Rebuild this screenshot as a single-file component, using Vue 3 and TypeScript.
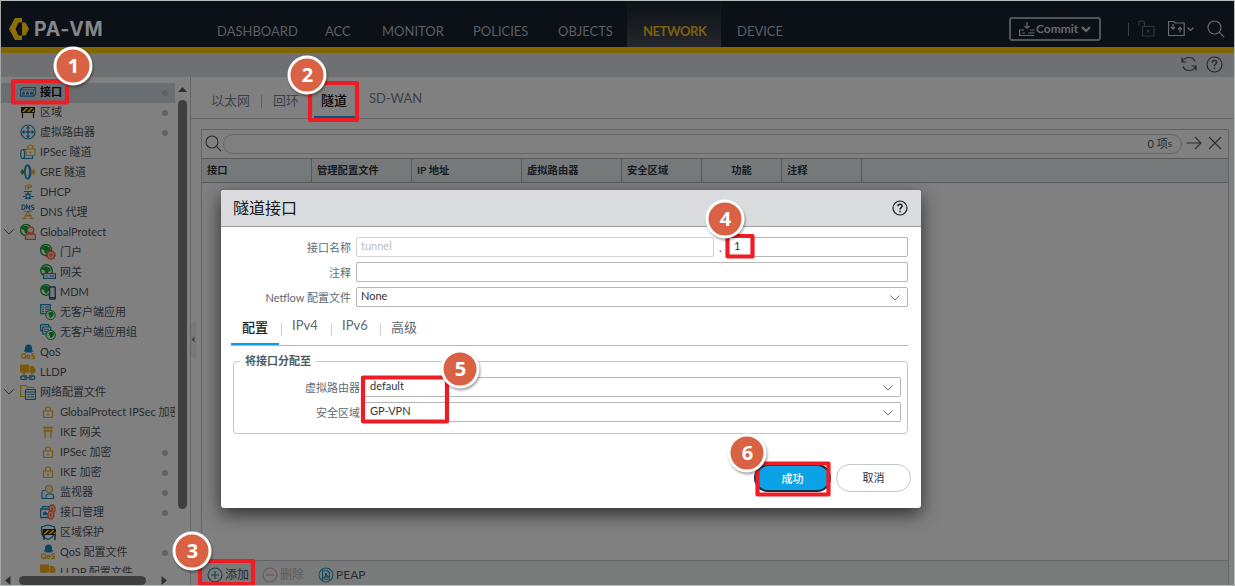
<script setup lang="ts">
interface NavItem { label: string; width: number; active?: boolean }
interface TreeNode { label: string; icon: string; level: number; dot?: boolean; open?: boolean; selected?: boolean }
interface Column { label: string; width: number; center?: boolean }
interface Mark { n: number; cx: number; cy: number; x: number; y: number; w: number; h: number }

const nav: NavItem[] = [
  { label: 'DASHBOARD', width: 108 },
  { label: 'ACC', width: 57 },
  { label: 'MONITOR', width: 91 },
  { label: 'POLICIES', width: 85 },
  { label: 'OBJECTS', width: 85 },
  { label: 'NETWORK', width: 94, active: true },
  { label: 'DEVICE', width: 76 },
]

const tree: TreeNode[] = [
  { label: '接口', icon: 'ports', level: 0, dot: true, selected: true },
  { label: '区域', icon: 'barrier', level: 0, dot: true },
  { label: '虚拟路由器', icon: 'router', level: 0, dot: true },
  { label: 'IPSec 隧道', icon: 'ipsec', level: 0 },
  { label: 'GRE 隧道', icon: 'gre', level: 0 },
  { label: 'DHCP', icon: 'dhcp', level: 0 },
  { label: 'DNS 代理', icon: 'dns', level: 0 },
  { label: 'GlobalProtect', icon: 'gp', level: 0, open: true },
  { label: '门户', icon: 'portal', level: 1 },
  { label: '网关', icon: 'gateway', level: 1 },
  { label: 'MDM', icon: 'mdm', level: 1 },
  { label: '无客户端应用', icon: 'app', level: 1 },
  { label: '无客户端应用组', icon: 'appgroup', level: 1 },
  { label: 'QoS', icon: 'qos', level: 0 },
  { label: 'LLDP', icon: 'lldp', level: 0 },
  { label: '网络配置文件', icon: 'folder', level: 0, open: true },
  { label: 'GlobalProtect IPSec 加密', icon: 'lock', level: 1 },
  { label: 'IKE 网关', icon: 'ike', level: 1 },
  { label: 'IPSec 加密', icon: 'lock', level: 1, dot: true },
  { label: 'IKE 加密', icon: 'lock', level: 1, dot: true },
  { label: '监视器', icon: 'monitor', level: 1, dot: true },
  { label: '接口管理', icon: 'mgmt', level: 1, dot: true },
  { label: '区域保护', icon: 'shield', level: 1 },
  { label: 'QoS 配置文件', icon: 'qos', level: 1, dot: true },
  { label: 'LLDP 配置文件', icon: 'lldp', level: 1 },
]

const columns: Column[] = [
  { label: '接口', width: 110 },
  { label: '管理配置文件', width: 100 },
  { label: 'IP 地址', width: 110 },
  { label: '虚拟路由器', width: 100 },
  { label: '安全区域', width: 80 },
  { label: '功能', width: 80, center: true },
  { label: '注释', width: 80 },
]

const marks: Mark[] = [
  { n: 1, cx: 73, cy: 66, x: 11, y: 79, w: 58, h: 25.5 },
  { n: 2, cx: 307, cy: 75, x: 308, y: 81, w: 51, h: 41 },
  { n: 3, cx: 192, cy: 551, x: 198, y: 559, w: 57, h: 27 },
  { n: 4, cx: 725, cy: 219, x: 725.5, y: 234, w: 29, h: 24.5 },
  { n: 5, cx: 460, cy: 369, x: 361, y: 375.5, w: 88, h: 48 },
  { n: 6, cx: 747, cy: 453, x: 755.5, y: 461.5, w: 75, h: 35 },
]

const B = '#0d4560'
const Y = '#78590e'
const G = '#0c521c'
const R = '#8a3018'
const barrier = (x: number, y: number) =>
  `<g transform="translate(${x} ${y})"><path d="M0 0h14v6h-14z" fill="#15130a"/><path d="M1 5l4-4h2l-4 4zM6 5l4-4h2l-4 4zM10.5 5l2.5-2.5v2.5z" fill="#9a7d10"/><path d="M1.5 6v5M12.5 6v5" stroke="#15130a" stroke-width="1.2"/></g>`
const globe = (x: number, y: number, r: number) =>
  `<g transform="translate(${x} ${y})"><circle r="${r}" fill="none" stroke="${G}" stroke-width="1.4"/><path d="M-2-4l3 0 3 2 0 3-2 0-1 3-2-1-1-3-3-1 1-2z" fill="${G}"/></g>`
const lock = (x: number, y: number) =>
  `<g transform="translate(${x} ${y})" fill="none" stroke="${Y}" stroke-width="1.2"><path d="M.5 4.500h9v6.500h-9zM2.500 4.500v-2q0-2 2.500-2t2.500 2v2"/><path d="M5 7v2" stroke-width="1.6"/></g>`
const truck = `<path d="M0 .5h9v8h-9zM9.500 2h4l2 3v3.500h-6z" fill="${Y}"/><circle cx="4" cy="9" r="1.500" fill="${Y}"/><circle cx="12" cy="9" r="1.500" fill="${Y}"/><g fill="none" stroke="${B}" stroke-width="1.300"><path d="M7 12h-4.500q-1.800 0-1.800 1.700t1.800 1.700h4.500M9 12h4q1.800 0 1.800 1.700t-1.800 1.700h-4M4.500 13.700h7"/></g>`

const icons: Record<string, string> = {
  ports: `<path d="M3 3.500h12.500v7l-2 1.700h-13v-6.500z" fill="none" stroke="${B}" stroke-width="1.200"/><path d="M.5 5.700h13l2-1.700M13.500 5.700v6.500" stroke="${B}" fill="none" stroke-width=".7"/><path d="M2 10.500v-2h1v-1h1v1h1v2zM6 10.500v-2h1v-1h1v1h1v2zM10 10.500v-2h1v-1h1v1h1v2z" fill="${B}"/>`,
  barrier: barrier(1, 3),
  router: `<circle cx="8" cy="8" r="7" fill="none" stroke="${B}" stroke-width="1.200"/><path d="M8 2.500v11M2.500 8h11M6.300 4.500l1.700-2 1.700 2M6.300 11.500l1.700 2 1.700-2M4.500 6.300l-2 1.700 2 1.700M11.500 6.300l2 1.700-2 1.700" fill="none" stroke="${B}" stroke-width="1.100"/><circle cx="8" cy="8" r="1.500" fill="${B}"/>`,
  ipsec: `<ellipse cx="2.700" cy="10" rx="2" ry="4.500" fill="none" stroke="${B}" stroke-width="1.200"/><path d="M3 5.500h3M3 14.500h9.500v-2.500" fill="none" stroke="${B}" stroke-width="1.200"/>${lock(5.5, 0.5)}`,
  gre: `<ellipse cx="7.500" cy="8" rx="2.500" ry="6.800" fill="none" stroke="${B}" stroke-width="1.700"/><path d="M8 1.200q3 1 3 6.800t-3 6.800" fill="none" stroke="${B}"/><path d="M0 8h4M2 5.500l2.500 2.500-2.500 2.500z" stroke="${G}" fill="${G}"/><path d="M15.500 8h-3M14.500 5.500l-3 2.500 3 2.500" stroke="${Y}" fill="none" stroke-width="1.500"/>`,
  dhcp: `<g fill="none" stroke-width="1.200"><path d="M5.500 1v4.500M8 5.500v-4.500h2q1.500 0 1.500 1.200t-1.500 1.200h-2" stroke="${Y}"/><path d="M4 7.500h8M8 7.500v2.500M5 10h6M5 14.500h6M3 12.500h2.500M10.500 12.500h3" stroke="${B}"/><circle cx="8" cy="12.300" r="2" stroke="${B}"/></g>`,
  dns: `<g fill="none" stroke-width="1.100"><path d="M2 1v4.500h1q2 0 2-2.200t-2-2.300zM6.500 5.500v-4.500l3 4.500v-4.500M14 1.200h-1.500q-1.500.2-1.300 1.200t1.500 1q1.500.2 1.300 1.300t-2.500.7" stroke="${B}"/><path d="M3.500 7.500h9M8 7.500v2M5 14.500v-3h6v3M2.500 14.500h4M9.500 14.500h4" stroke="${Y}"/><circle cx="8" cy="10.500" r="1.800" stroke="${Y}"/></g>`,
  gp: `${globe(6, 6, 5.5)}<g stroke="${R}" stroke-width="1.300" fill="#777"><circle cx="10.500" cy="6" r="3.200"/><path d="M5.500 15.300v-3q0-2.300 2.300-2.300h5.500q2.300 0 2.300 2.300v3z"/></g>`,
  portal: `${globe(6, 6, 5.5)}<circle cx="10.800" cy="11" r="3.500" fill="#806a60" stroke="${R}" stroke-width="1.200"/><circle cx="10.800" cy="11" r="4.700" fill="none" stroke="${R}" stroke-dasharray="1.500 1.450" stroke-width="1.200"/><circle cx="10.800" cy="11" r="1.300" fill="none" stroke="${R}"/>`,
  gateway: `${globe(6.5, 6.5, 5.8)}<path d="M3.500 9.500h12v5h-12z" fill="#777" stroke="${B}" stroke-width="1.200"/><path d="M5.500 12h2M10 12h4" stroke="${B}"/>`,
  mdm: `${globe(6, 6, 5.3)}<rect x="9.500" y="3" width="5.800" height="12" rx=".8" fill="#777" stroke="#0e3448" stroke-width="1.500"/><path d="M10 13.700h5" stroke="#0e3448" stroke-width="1.300"/>`,
  app: `<path d="M.7.700h9.600v9h-9.600z" fill="none" stroke="${B}" stroke-width="1.200"/><path d="M2 3h2M5 3h4M2 5.300h2M5 5.300h4M2 7.600h2M5 7.600h4" stroke="${B}"/><circle cx="10.500" cy="11" r="4.700" fill="#728074" stroke="${G}"/><path d="M8 9l4-1.500 2 2-2 3.500-2 1-1-3z" fill="${G}"/>`,
  appgroup: `<path d="M.7.700h8v2M.7.700v6h2M2.700 3h8v7h-8z" fill="none" stroke="${B}" stroke-width="1.200"/><path d="M4 5.300h5M4 7.600h5" stroke="${B}"/><circle cx="10.800" cy="11" r="4.700" fill="#728074" stroke="${G}"/><path d="M8.500 9l4-1.500 2 2-2 3.500-2 1-1-3z" fill="${G}"/>`,
  qos: `<path d="M5 5.500q-.5-5 3.500-5t3.500 5l1.500 2h-10z" fill="${B}"/><path d="M5 8.500l1-2h5l1 2z" fill="${B}"/><g fill="none" stroke="${Y}" stroke-width="1.300"><circle cx="3.700" cy="12" r="2.200"/><path d="M4.200 13l1.700 2"/><circle cx="8.500" cy="13" r="1.500"/><path d="M14.500 10h-1.500q-1.500.3-1 1.500t2 1q1 1 0 1.700t-2.500.3"/></g>`,
  lldp: truck,
  folder: `<path d="M5 12.500h-4.300v-11h5l1.500 2h6.500v2" fill="none" stroke="${Y}" stroke-width="1.200"/><rect x="5.500" y="5.500" width="10" height="10" rx="1" fill="#7b7d7e" stroke="${B}" stroke-width="1.200"/><path d="M6 8h9.500M7.500 10.500h2M10.500 10.500h3.500M7.500 13h2M10.500 13h3.500" stroke="${B}"/>`,
  lock: lock(3, 2.5),
  ike: `<path d="M3 3.500h10M3.500 7h9M5 3.500v10.500M11 3.500v10.500M8 3.500v3.500" fill="none" stroke="${Y}" stroke-width="1.300"/>`,
  monitor: `<path d="M5 6.500h-1.500q-1.500 0-1.500 1.500v6.500h4v-3q.5-1.500 3-1.500h2.500q2 0 2 1.500v3h-9.500" fill="none" stroke="${B}" stroke-width="1.200"/><circle cx="9" cy="5" r="3.500" fill="#777" stroke="${Y}" stroke-width="1.200"/>`,
  mgmt: `<path d="M.7 5h9.500v8.500h-9.500zM2.500 5v-2.300h8" fill="none" stroke="${B}" stroke-width="1.300"/><path d="M3 11v-2l2-2 2 2v2z" fill="${B}"/><g fill="#806a60" stroke="${R}" stroke-width="1.300"><ellipse cx="12.200" cy="5" rx="3" ry="4"/><ellipse cx="10.800" cy="11" rx="3" ry="4"/></g><path d="M12.200 3.500v3M10.800 9.500v3" stroke="${R}" stroke-width="1.500"/>`,
  shield: `<path d="M1.500 3l6.500-2 6.500 2v5q0 5-6.500 7.300q-6.500-2.300-6.500-7.300z" fill="none" stroke="${B}" stroke-width="1.300"/>${barrier(2.5, 5)}`,
}
</script>

<template>
  <div class="app">
    <header class="top">
      <svg class="logo" viewBox="0 0 20 22" width="20" height="22">
        <path d="M6 0h7v4.500H9.500L6.500 11l3 6.500H13V22H6L0 11z" fill="#8b6e08" />
        <path d="M13 4.500h3.500L20 11l-3.500 6.500H13z" fill="#8b6e08" />
        <path d="M9.500 5H13v3.500q-1.500 2.500 0 5V17H9.500L7 11z" fill="#0c1118" />
      </svg>
      <span class="brand">PA-VM</span>
      <nav>
        <a v-for="n in nav" :key="n.label" :class="{ active: n.active }" :style="{ width: n.width + 'px' }">{{ n.label }}</a>
      </nav>
      <div class="commit">
        <svg width="16" height="15" viewBox="0 0 16 15" fill="none" stroke="#666a6e" stroke-width="1.200">
          <path d="M8 0v6M5.500 4L8 6.300 10.500 4M5 8H.6v5.500h14.800M15.400 8H11M3.500 11h2.500M9 11h6.400" />
        </svg>
        <span>Commit</span>
        <svg width="10" height="8" viewBox="0 0 10 8"><path d="M1 2l4 4 4-4" fill="none" stroke="#666a6e" stroke-width="2.200" /></svg>
      </div>
      <span class="bar"></span>
      <svg class="unlock" width="17" height="17" viewBox="0 0 17 17" fill="none" stroke="#30363c" stroke-width="1.200">
        <path d="M4.500 6.500h11.500v9.500H4.500zM6.500 6V3.500q0-2.700-2.800-2.700T.7 3.500v2" /><path d="M10.200 9.500v3" stroke-width="2" />
      </svg>
      <svg class="sync" width="26" height="17" viewBox="0 0 26 17" fill="none" stroke="#676b70" stroke-width="1.200">
        <path d="M.6 1.500h5.200l1.500 1.500h8.900v12.500H.6zM5 4v5M3 7l2 2.200L7 7M12 12.500v-5M10 9.500l2-2.200 2 2.200M19.500 7.500l3 3 3-3" />
      </svg>
      <svg class="find" width="18" height="18" viewBox="0 0 18 18" fill="none" stroke="#676b70" stroke-width="1.200">
        <circle cx="7.500" cy="7.500" r="6.500" /><path d="M12.200 12.200l5 5" />
      </svg>
    </header>

    <div class="subbar">
      <svg width="16" height="16" viewBox="0 0 16 16" fill="none" stroke="#26282a" stroke-width="1.200">
        <path d="M1 1.500v4.500h4.500M1.200 5.500Q3.500 1.500 8 1.500q4.500 0 6 4M15 14.500V10h-4.500M14.800 10.500q-2.300 4-6.800 4-4.500 0-6-4" />
      </svg>
      <svg width="17" height="17" viewBox="0 0 17 17" fill="none" stroke="#26282a">
        <circle cx="8.500" cy="8.500" r="7.500" stroke-width="1.100" /><path d="M6.300 6.700q0-2.200 2.200-2.200t2.200 2q0 1-1.300 1.800-.9.600-.9 1.700M8.500 11.500v1.500" stroke-width="1.400" />
      </svg>
    </div>

    <div class="body">
      <aside>
        <div class="treearea">
          <div class="tree">
            <div v-for="(t, i) in tree" :key="i" class="node" :class="{ selected: t.selected, child: t.level === 1 }">
              <span class="exp"><svg v-if="t.open" width="10" height="6" viewBox="0 0 10 6"><path d="M.5.500L5 5 9.500.500" fill="none" stroke="#303234" /></svg></span>
              <svg class="ico" width="16" height="16" viewBox="0 0 16 16" v-html="icons[t.icon]"></svg>
              <span class="lbl">{{ t.label }}</span>
              <i v-if="t.dot" class="dot"></i>
            </div>
          </div>
          <div class="vscroll">
            <svg width="9" height="5" viewBox="0 0 9 5"><path d="M0 5L4.500 0 9 5z" fill="#303030" /></svg>
            <div class="vthumb"></div>
          </div>
        </div>
        <div class="hscroll">
          <svg width="6" height="9" viewBox="0 0 6 9"><path d="M5.500 0v9L0 4.500z" fill="#303030" /></svg>
          <div class="hthumb"></div>
          <svg width="6" height="9" viewBox="0 0 6 9"><path d="M.5 0v9L6 4.500z" fill="#303030" /></svg>
        </div>
      </aside>

      <main>
        <svg class="grip" width="5" height="36" viewBox="0 0 5 36"><path d="M0 4L4.500 0v36L0 32z" fill="#7a7a7a" stroke="#727272" stroke-width=".6" /><path d="M3.500 14.500v6L.5 17.500z" fill="#404040" /></svg>
        <div class="tabs">
          <span class="t1">以太网</span><i></i><span class="t2">回环</span><span class="t3">隧道</span><span class="t4">SD-WAN</span>
        </div>
        <div class="panel">
          <div class="search">
            <svg width="17" height="17" viewBox="0 0 17 17" fill="none" stroke="#2b2d2f" stroke-width="1.100"><circle cx="7" cy="7" r="6" /><path d="M11.300 11.300l5 5" /></svg>
            <div class="box"><span>0 项</span><small>s</small></div>
            <svg width="16" height="14" viewBox="0 0 16 14" fill="none" stroke="#2b2d2f" stroke-width="1.100"><path d="M.5 7h14M9 1l6 6-6 6" /></svg>
            <svg class="x" width="14" height="14" viewBox="0 0 14 14" fill="none" stroke="#2b2d2f" stroke-width="1.100"><path d="M1 1l12 12M13 1L1 13" /></svg>
          </div>
          <div class="thead">
            <div v-for="c in columns" :key="c.label" class="th" :class="{ center: c.center }" :style="{ width: c.width + 'px' }">{{ c.label }}</div>
          </div>
          <div class="rows"></div>
          <div class="tools">
            <svg width="16" height="16" viewBox="0 0 16 16" fill="none" stroke="#183f50" stroke-width="1.100"><circle cx="8" cy="8" r="7" /><path d="M4 8h8M8 4v8" /></svg>
            <span class="add">添加</span>
            <svg width="16" height="16" viewBox="0 0 16 16" fill="none" stroke="#73555a" stroke-width="1.100"><circle cx="8" cy="8" r="7" /><path d="M4 8h8" /></svg>
            <span class="del">删除</span>
            <svg width="16" height="16" viewBox="0 0 16 16" fill="none" stroke="#134b62" stroke-width="1.100"><circle cx="8" cy="8" r="7" /><path d="M4.500 3.800h5l2 2v6.400h-7zM5.500 11q2.500-2 2.500-5 .5 3 3 4-3-.5-5.500 1" /></svg>
            <span class="peap">PEAP</span>
          </div>
        </div>
      </main>
    </div>

    <section class="dialog">
      <div class="dhead">
        <span>隧道接口</span>
        <svg width="16" height="16" viewBox="0 0 16 16" fill="none" stroke="#1b1c1e"><circle cx="8" cy="8" r="7" stroke-width="1.200" /><path d="M5.900 6.300q0-2.100 2.100-2.100t2.100 1.900q0 1-1.200 1.700-.9.600-.9 1.600M8 10.800v1.500" stroke-width="1.500" /></svg>
      </div>
      <div class="dbody">
        <div class="frow"><label>接口名称</label><div class="inp ghost">tunnel</div><b class="period">.</b><div class="inp num">1</div></div>
        <div class="frow"><label>注释</label><div class="inp"></div></div>
        <div class="frow"><label>Netflow 配置文件</label><div class="inp sel">None<svg width="10" height="6" viewBox="0 0 10 6"><path d="M.5.500L5 5 9.500.500" fill="none" stroke="#6d7175" /></svg></div></div>
        <div class="dtabs">
          <span class="on">配置</span><i></i><span class="v4">IPv4</span><i></i><span class="v6">IPv6</span><i></i><span class="adv">高级</span>
        </div>
        <fieldset>
          <legend>将接口分配至</legend>
          <div class="frow"><label>虚拟路由器</label><div class="inp sel">default<svg width="10" height="6" viewBox="0 0 10 6"><path d="M.5.500L5 5 9.500.500" fill="none" stroke="#6d7175" /></svg></div></div>
          <div class="frow"><label>安全区域</label><div class="inp sel">GP-VPN<svg width="10" height="6" viewBox="0 0 10 6"><path d="M.5.500L5 5 9.500.500" fill="none" stroke="#6d7175" /></svg></div></div>
        </fieldset>
        <div class="buttons"><button class="ok">成功</button><button class="cancel">取消</button></div>
      </div>
    </section>

    <svg class="marks" width="1235" height="586" viewBox="0 0 1235 586">
      <g v-for="m in marks" :key="m.n">
        <rect :x="m.x + 2" :y="m.y + 2" :width="m.w - 4" :height="m.h - 4" fill="none" stroke="#ee1c24" stroke-width="4.200" stroke-linejoin="round" />
        <circle class="disc" :cx="m.cx" :cy="m.cy" r="18" fill="#d96244" stroke="#fff" stroke-width="3" />
        <text :x="m.cx + 0.5" :y="m.cy + 7" text-anchor="middle">{{ m.n }}</text>
      </g>
    </svg>
  </div>
</template>

<style>
html, body { background: #808080; overflow: hidden; }
</style>

<style scoped>
* { box-sizing: border-box; }
.app { position: relative; width: 1235px; height: 586px; border: 1px solid #b8bdbb; border-left-color: #a5a5a5; background: #808080; font-family: Lato, "Noto Sans CJK SC", sans-serif; font-size: 11px; color: #272b2f; overflow: hidden; display: flex; flex-direction: column; }
svg { display: block; flex: none; }
.top { height: 52px; background: #0c1118; border-bottom: 6px solid #806500; display: flex; align-items: flex-start; flex: none; }
.logo { margin: 17px 0 0 8px; }
.brand { margin-left: 5px; margin-top: 16px; width: 72px; font: 700 19.500px/24px Inter, sans-serif; letter-spacing: .7px; color: #85878a; }
nav { display: flex; margin-left: 95px; height: 46px; }
nav a { padding: 21px 0 0 16px; font-size: 13px; line-height: 18px; letter-spacing: 0; color: #5a5f64; white-space: nowrap; }
nav a.active { background: linear-gradient(#0c1216, #24272b); color: #7c6010; font-weight: 700; letter-spacing: -.45px; }
.commit { margin: 16px 0 0 212px; width: 92px; height: 24px; border: 2px solid #505559; border-radius: 3px; display: flex; align-items: center; padding-left: 8px; font-weight: 700; font-size: 12px; color: #666a6e; }
.commit span { margin: -1px 3px 0 1px; }
.bar { width: 1px; height: 13px; margin: 22px 9px 0 27px; background: #3c4247; }
.unlock { margin-top: 19px; }
.sync { margin: 19px 13px 0 13px; }
.find { margin-top: 19px; }
.subbar { height: 24px; background: #6f7072; display: flex; justify-content: flex-end; align-items: center; padding: 0 11px 2px 0; gap: 9px; flex: none; }
.body { flex: 1; display: flex; min-height: 0; }
aside { width: 189px; display: flex; flex-direction: column; }
.treearea { height: 496px; display: flex; }
.tree { width: 174px; padding-top: 6px; overflow: hidden; }
.node { height: 20px; display: flex; align-items: center; padding-bottom: 2px; position: relative; white-space: nowrap; }
.node.selected { background: #6b6e70; color: #050607; font-weight: 700; }
.exp { width: 19px; padding-left: 3px; flex: none; }
.child .exp { width: 39px; }
.lbl { margin-left: 4px; line-height: 18px; font-size: 11px; }
.dot { position: absolute; left: 161px; top: 7px; width: 6px; height: 6px; border-radius: 50%; background: #5f6163; }
.vscroll { margin-left: 2px; width: 11px; display: flex; flex-direction: column; align-items: center; padding-top: 10px; }
.vthumb { width: 9px; height: 409px; margin-top: 8px; border-radius: 5px; background: #3f3f3f; }
.hscroll { height: 12px; display: flex; align-items: center; padding: 2px 0 0 4px; }
.hthumb { width: 127px; height: 9px; border-radius: 5px; background: #3f3f3f; margin: 0 15px 0 8px; }
main { flex: 1; border-left: 1px solid #626466; position: relative; display: flex; flex-direction: column; min-width: 0; }
.grip { position: absolute; left: 0; top: 245px; }
.tabs { height: 42px; border-bottom: 1px solid #666869; display: flex; align-items: flex-start; font-size: 13px; line-height: 20px; color: #3c4248; padding-left: 20px; flex: none; }
.tabs .t1, .tabs .t2, .tabs .t3 { margin-top: 13px; }
.tabs i { width: 1px; height: 13px; background: #606365; margin: 18px 11px 0 11px; }
.tabs .t3 { margin-left: 15px; width: 45px; padding: 0 0 5px 7px; height: 28px; border-bottom: 2px solid #06567a; color: #050607; font-weight: 500; }
.tabs .t4 { margin-left: 10px; margin-top: 11px; }
.panel { margin: 10px 5px 0 10px; border: 1px solid #636566; border-bottom: 0; flex: 1; display: flex; flex-direction: column; }
.search { height: 28px; display: flex; align-items: center; padding: 0 6px 2px 3px; }
.box { flex: 1; height: 20px; margin: 1px 4px 0 1px; border: 1px solid #636566; border-radius: 10px; display: flex; justify-content: flex-end; align-items: center; padding: 0 9px 2px 0; }
.box small { font-size: 10px; }
.search .x { margin-left: 6px; }
.thead { height: 25px; display: flex; background: #767979; border: 1px solid #595b5d; border-width: 1px 0; }
.th { border-right: 1px solid #595b5d; padding-left: 5px; line-height: 22px; font-weight: 700; font-size: 10.300px; color: #181c20; }
.th.center { padding: 0; text-align: center; }
.rows { flex: 1; }
.tools { height: 25px; border-top: 1px solid #636566; background: #797b7b; display: flex; align-items: center; font-size: 12px; padding: 4px 0 0 5px; line-height: 16px; }
.add { margin: 0 13px 0 2px; }
.del { margin: 0 14px 0 2px; color: #5a5c5e; }
.peap { margin-left: 2px; font-size: 12px; }
.dialog { position: absolute; left: 220px; top: 189px; width: 700px; height: 318px; border-radius: 3px; background: #fff; box-shadow: 0 6px 18px rgba(0,0,0,.65); color: #60686f; }
.dhead { height: 37px; background: #dadbdd; border-bottom: 1px solid #9b9d9f; border-radius: 3px 3px 0 0; display: flex; justify-content: space-between; align-items: center; padding: 0 13px 0 12px; font-size: 16px; line-height: 22px; color: #17191b; }
.dhead span { margin-top: -1px; }
.dbody { padding: 10px 13px 0 10px; }
.frow { display: flex; height: 20px; margin-bottom: 5px; }
.frow label { width: 120px; text-align: right; line-height: 22px; margin-right: 5px; white-space: nowrap; }
.inp { flex: 1; height: 20px; border: 1px solid #b3b5b7; border-radius: 2px; padding-left: 4px; line-height: 16px; font-size: 11px; color: #303438; display: flex; justify-content: space-between; }
.inp.ghost { flex: none; width: 358px; border-color: #d0d2d3; color: #b9bdc0; }
.inp.num { padding-left: 6px; }
.period { width: 13px; padding-left: 5px; line-height: 22px; font-weight: 400; color: #404040; }
.inp svg { margin: 7px 7px 0 0; }
.dtabs { height: 34px; border-bottom: 1px solid #b4b7b9; display: flex; align-items: flex-start; font-size: 13px; line-height: 20px; color: #60686f; }
.dtabs .on { margin-top: 3px; width: 48px; height: 30px; padding: 2px 0 0 11px; border-bottom: 2px solid #0a9fe0; color: #202428; font-weight: 500; }
.dtabs i { width: 1px; height: 13px; margin: 11px 10px 0 2px; background: #c4d0d4; }
.dtabs .v4, .dtabs .v6 { width: 37px; margin-top: 3px; }
.dtabs .v6 { width: 36px; }
.dtabs .adv { margin-top: 5px; }
fieldset { margin: 6px 0 0 2px; padding: 0 6px 0 0; border: 1px solid #c3c6c8; border-radius: 4px; height: 82px; min-width: 0; }
legend { margin-left: 6px; padding: 0 5px; line-height: 18px; font-weight: 700; color: #4c5b66; font-size: 11px; }
fieldset .frow { margin: 0 0 5px; position: relative; top: 7px; }
fieldset .frow label { width: 126px; margin-right: 2px; }
fieldset .inp { padding-left: 7px; }
.buttons { display: flex; justify-content: flex-end; margin: 30px -3px 0 0; gap: 5px; align-items: center; }
.buttons button { font-family: inherit; font-size: 11px; border-radius: 15px; height: 28px; width: 75px; padding: 0; line-height: 26px; }
.buttons .ok { width: 77px; background: #0ca2e8; color: #fff; border: 2px solid #0c2d3c; font-weight: 500; }
.buttons .cancel { background: #fff; color: #303438; border: 1px solid #c3c6c8; }
.marks { position: absolute; left: -1px; top: -1px; }
.disc { filter: drop-shadow(1px 2px 1px rgba(0,0,0,.35)); }
.marks text { font: 700 20px "Noto Sans", Arial, sans-serif; fill: #fff; }
</style>
